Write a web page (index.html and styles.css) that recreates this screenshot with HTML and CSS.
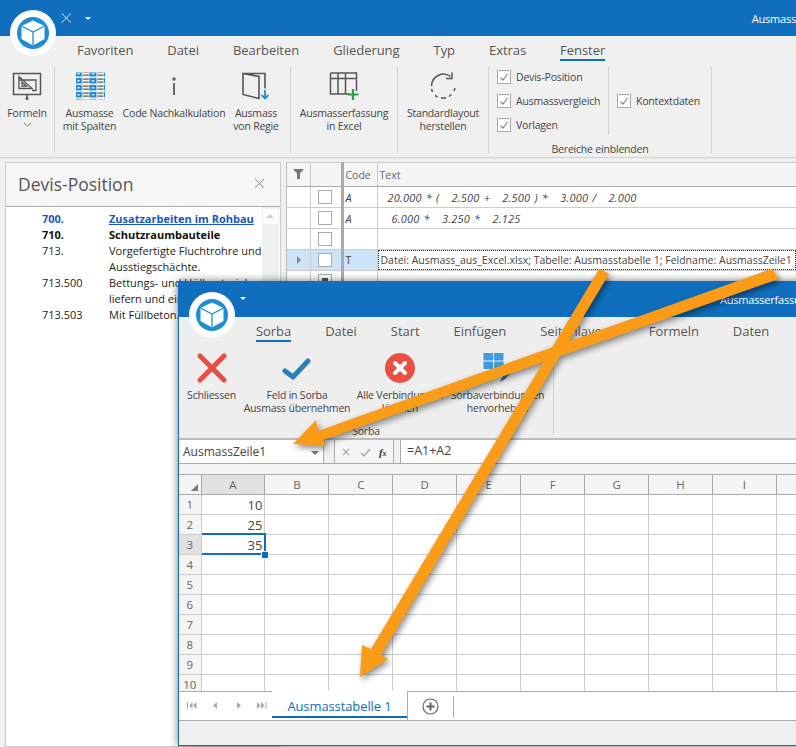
FILE: index.html
```html
<!DOCTYPE html>
<html lang="de">
<head>
    <meta charset="UTF-8">
    <title>Ausmass aus Excel</title>
    <link rel="stylesheet" href="styles.css">
</head>
<body>
    <!-- Sorba main window -->
    <div class="app">
        <div class="titlebar">
            <svg class="title-close" width="14" height="14" viewBox="0 0 14 14"><path d="M1 1l12 12M13 1L1 13" stroke="#fff" stroke-width="1.100" fill="none"/></svg>
            <span class="caret"></span>
            <span class="title-text">Ausmass</span>
        </div>
        <div class="tabs">
            <span>Favoriten</span><span>Datei</span><span>Bearbeiten</span><span>Gliederung</span><span>Typ</span><span>Extras</span><span class="tab-active">Fenster</span>
        </div>
        <div class="ribbon">
            <div class="group group-formeln">
                <div class="rb-item">
                    <svg class="rb-icon" width="30" height="30" viewBox="0 0 30 30"><path d="M1.500 2.500h27v21h-27zM15 24v4" stroke="#555" stroke-width="1.500" fill="none"/><circle cx="15" cy="27.500" r="1.500" fill="#555"/><path d="M7 5.500l13 12H7zM10 11v4h4.500zM7 9h17v10.500H20" stroke="#555" stroke-width="1.300" fill="none"/></svg>
                    <span>Formeln</span>
                    <svg class="chev" width="9" height="5" viewBox="0 0 9 5"><path d="M1 1l3.500 3L8 1" stroke="#777" fill="none"/></svg>
                </div>
            </div>
            <div class="group group-ausmass">
                <div class="rb-item w-spalten">
                    <svg class="rb-icon" width="30" height="30" viewBox="0 0 30 30">
                        <defs><pattern id="spalten" width="14.500" height="7" patternUnits="userSpaceOnUse"><rect width="7" height="5.500" fill="#1f8dd6"/><rect x="2.500" y="2" width="2" height="1.500" fill="#fff"/><rect x="8" y="0.500" width="6" height="1.300" fill="#666"/><rect x="8" y="3.500" width="6" height="1.300" fill="#666"/></pattern></defs>
                        <rect x="1" y="1.500" width="29" height="27" fill="url(#spalten)"/>
                    </svg>
                    <span>Ausmasse<br>mit Spalten</span>
                </div>
                <div class="rb-item w-code">
                    <svg class="rb-icon" width="30" height="30" viewBox="0 0 30 30"><circle cx="15" cy="8" r="1.800" fill="#666"/><rect x="14" y="12" width="2" height="12" fill="#666"/></svg>
                    <span>Code Nachkalkulation</span>
                </div>
                <div class="rb-item w-regie">
                    <svg class="rb-icon" width="30" height="30" viewBox="0 0 30 30"><path d="M2 2.500h22v15M2 2.500l16 3v22l-16-4zM18 6" stroke="#555" stroke-width="1.600" fill="none"/><path d="M24 19v8M20.500 24l3.500 3.500 3.500-3.500" stroke="#1f8dd6" stroke-width="1.800" fill="none"/></svg>
                    <span>Ausmass<br>von Regie</span>
                </div>
            </div>
            <div class="group group-excel">
                <div class="rb-item w-excel">
                    <svg class="rb-icon" width="30" height="30" viewBox="0 0 30 30"><path d="M1.500 2h26v18M1.500 2v21h19M1.500 7.500h26M9 2v21M16.500 2v21" stroke="#555" stroke-width="1.500" fill="none"/><path d="M24 18v11M18.500 23.500h11" stroke="#2a9d4a" stroke-width="2.200" fill="none"/></svg>
                    <span>Ausmasserfassung<br>in Excel</span>
                </div>
            </div>
            <div class="group group-layout">
                <div class="rb-item w-layout">
                    <svg class="rb-icon" width="30" height="30" viewBox="0 0 30 30"><path d="M22.500 5.500A12 12 0 0 0 3.500 15" stroke="#555" stroke-width="1.500" fill="none"/><path d="M3.500 18l1 3M7 24.500l2.500 1.500M13 27h5M21 25.500l2.500-2M26 20l1-3" stroke="#555" stroke-width="1.500" fill="none"/><path d="M24 1.500v6h-6" stroke="#555" stroke-width="1.500" fill="none"/></svg>
                    <span>Standardlayout<br>herstellen</span>
                </div>
            </div>
            <div class="group group-checks">
                <div class="checks-row">
                    <div class="check-col">
                        <label class="check"><i class="box"><svg width="12" height="12" viewBox="0 0 12 12"><path d="M2.500 6.500l2.500 2.500 4.500-6" stroke="#888" stroke-width="1.200" fill="none"/></svg></i>Devis-Position</label>
                        <label class="check"><i class="box"><svg width="12" height="12" viewBox="0 0 12 12"><path d="M2.500 6.500l2.500 2.500 4.500-6" stroke="#888" stroke-width="1.200" fill="none"/></svg></i>Ausmassvergleich</label>
                        <label class="check"><i class="box"><svg width="12" height="12" viewBox="0 0 12 12"><path d="M2.500 6.500l2.500 2.500 4.500-6" stroke="#888" stroke-width="1.200" fill="none"/></svg></i>Vorlagen</label>
                    </div>
                    <div class="check-col check-col-2">
                        <label class="check"><i class="box"><svg width="12" height="12" viewBox="0 0 12 12"><path d="M2.500 6.500l2.500 2.500 4.500-6" stroke="#888" stroke-width="1.200" fill="none"/></svg></i>Kontextdaten</label>
                    </div>
                </div>
                <div class="group-label">Bereiche einblenden</div>
            </div>
        </div>

        <div class="workspace">
            <div class="pane">
                <div class="pane-head">
                    <h2>Devis-Position</h2>
                    <svg width="11" height="11" viewBox="0 0 11 11"><path d="M1 1l9 9M10 1l-9 9" stroke="#888" fill="none"/></svg>
                </div>
                <div class="pane-body">
                    <div class="devis">
                        <span class="pos pos-link">700.</span><span class="pos-link pos-title">Zusatzarbeiten im Rohbau</span>
                        <b class="pos">710.</b><b>Schutzraumbauteile</b>
                        <span class="pos">713.</span><span>Vorgefertigte Fluchtrohre und Ausstiegschächte.</span>
                        <span class="pos">713.500</span><span>Bettungs- und Hüllmaterial liefern und einbauen.</span>
                        <span class="pos">713.503</span><span>Mit Füllbeton.</span>
                    </div>
                    <div class="scroll"><div class="scroll-btn"></div></div>
                </div>
            </div>

            <div class="grid-wrap">
                <table class="mgrid">
                    <thead>
                        <tr>
                            <th class="c-ind"><svg width="11" height="10" viewBox="0 0 11 10"><path d="M0 0h11L7 4.500V10H4V4.500z" fill="#777"/></svg></th>
                            <th class="c-chk"></th>
                            <th class="c-code">Code</th>
                            <th class="c-text">Text</th>
                        </tr>
                    </thead>
                    <tbody>
                        <tr class="formula">
                            <td class="c-ind"></td><td class="c-chk"><i class="box"></i></td><td class="c-code">A</td><td class="c-text">20.000 * (&nbsp;&nbsp;&nbsp;2.500 +&nbsp;&nbsp;&nbsp;2.500 ) *&nbsp;&nbsp;&nbsp;3.000 /&nbsp;&nbsp;&nbsp;2.000</td>
                        </tr>
                        <tr class="formula">
                            <td class="c-ind"></td><td class="c-chk"><i class="box"></i></td><td class="c-code">A</td><td class="c-text">&nbsp;6.000 *&nbsp;&nbsp;&nbsp;3.250 *&nbsp;&nbsp;&nbsp;2.125</td>
                        </tr>
                        <tr>
                            <td class="c-ind"></td><td class="c-chk"><i class="box"></i></td><td class="c-code"></td><td class="c-text"></td>
                        </tr>
                        <tr class="row-current">
                            <td class="c-ind"><span class="row-arrow"></span></td><td class="c-chk"><i class="box"></i></td><td class="c-code">T</td><td class="c-text"><div class="focus-cell">Datei: Ausmass_aus_Excel.xlsx; Tabelle: Ausmasstabelle 1; Feldname: AusmassZeile1</div></td>
                        </tr>
                        <tr>
                            <td class="c-ind"></td><td class="c-chk"><i class="box box-mixed"></i></td><td class="c-code"></td><td class="c-text"></td>
                        </tr>
                    </tbody>
                </table>
            </div>
        </div>
    </div>

    <!-- Excel window on top -->
    <div class="xl">
        <div class="titlebar xl-title">
            <span class="caret"></span>
            <span class="title-text">Ausmasserfassung in Excel</span>
        </div>
        <div class="tabs xl-tabs">
            <span class="tab-active">Sorba</span><span>Datei</span><span>Start</span><span>Einfügen</span><span>Seitenlayout</span><span>Formeln</span><span>Daten</span>
        </div>
        <div class="xl-ribbon">
            <div class="xl-group">
                <div class="xl-items">
                    <div class="rb-item w-schliessen">
                        <svg class="xl-icon" width="30" height="30" viewBox="0 0 30 30"><path d="M3 3l24 24M27 3L3 27" stroke="#e94f44" stroke-width="5" stroke-linecap="round" fill="none"/></svg>
                        <span>Schliessen</span>
                    </div>
                    <div class="rb-item w-feld">
                        <svg class="xl-icon" width="30" height="30" viewBox="0 0 30 30"><path d="M3 18l8 6L26 8" stroke="#2d7fb8" stroke-width="5" stroke-linecap="round" stroke-linejoin="round" fill="none"/></svg>
                        <span>Feld in Sorba<br>Ausmass übernehmen</span>
                    </div>
                    <div class="rb-item w-alle">
                        <svg class="xl-icon" width="30" height="30" viewBox="0 0 30 30"><circle cx="15" cy="15" r="15" fill="#e94f44"/><path d="M10 10l10 10M20 10L10 20" stroke="#fff" stroke-width="4" stroke-linecap="round" fill="none"/></svg>
                        <span>Alle Verbindungen<br>löschen</span>
                    </div>
                    <div class="rb-item w-hervor">
                        <svg class="xl-icon" width="30" height="30" viewBox="0 0 30 30"><path d="M0.500 0h9.500v7.500H0.500zM11 0h9.500v7.500H11zM0.500 8.500h9.500v7.500H0.500zM11 8.500h9.500v7.500H11z" fill="#3d9ce0"/><path d="M17 29l2-5 7-7 2.500 2.500-7 7z" fill="#2d7fb8"/></svg>
                        <span>Sorbaverbindungen<br>hervorheben</span>
                    </div>
                </div>
                <div class="group-label">Sorba</div>
            </div>
        </div>
        <div class="formula-bar">
            <div class="namebox">AusmassZeile1<span class="name-caret"></span></div>
            <div class="fxbox">
                <svg width="40" height="12" viewBox="0 0 40 12"><path d="M4 3l6 6M10 3L4 9" stroke="#aaa" stroke-width="1.300" fill="none"/><path d="M22 7l3 3 6-7" stroke="#aaa" stroke-width="1.500" fill="none"/></svg>
                <em>f<small>x</small></em>
            </div>
            <div class="fxinput">=A1+A2</div>
        </div>
        <div class="sheet-gap"></div>
        <table class="sheet">
            <thead>
                <tr><th class="corner"></th><th class="col-on">A</th><th>B</th><th>C</th><th>D</th><th>E</th><th>F</th><th>G</th><th>H</th><th>I</th><th>J</th></tr>
            </thead>
            <tbody>
                <tr><th>1</th><td>10</td><td></td><td></td><td></td><td></td><td></td><td></td><td></td><td></td><td></td></tr>
                <tr><th>2</th><td>25</td><td></td><td></td><td></td><td></td><td></td><td></td><td></td><td></td><td></td></tr>
                <tr><th class="col-on">3</th><td class="cell-on">35</td><td></td><td></td><td></td><td></td><td></td><td></td><td></td><td></td><td></td></tr>
                <tr><th>4</th><td></td><td></td><td></td><td></td><td></td><td></td><td></td><td></td><td></td><td></td></tr>
                <tr><th>5</th><td></td><td></td><td></td><td></td><td></td><td></td><td></td><td></td><td></td><td></td></tr>
                <tr><th>6</th><td></td><td></td><td></td><td></td><td></td><td></td><td></td><td></td><td></td><td></td></tr>
                <tr><th>7</th><td></td><td></td><td></td><td></td><td></td><td></td><td></td><td></td><td></td><td></td></tr>
                <tr><th>8</th><td></td><td></td><td></td><td></td><td></td><td></td><td></td><td></td><td></td><td></td></tr>
                <tr><th>9</th><td></td><td></td><td></td><td></td><td></td><td></td><td></td><td></td><td></td><td></td></tr>
                <tr><th>10</th><td></td><td></td><td></td><td></td><td></td><td></td><td></td><td></td><td></td><td></td></tr>
            </tbody>
        </table>
        <div class="sheet-tabs">
            <div class="sheet-nav">
                <svg width="80" height="10" viewBox="0 0 80 10"><g fill="#aaa"><path d="M0 1h1v7H0zM5.500 1v7L2 4.500zM9.500 1v7L6 4.500z"/><path d="M30 1v7l-4-3.500z"/><path d="M50 1v7l4-3.500z"/><path d="M70 1v7l3.500-3.500zM74 1v7l3.500-3.500zM78.500 1h1v7h-1z"/></g></svg>
            </div>
            <div class="sheet-tab">Ausmasstabelle 1</div>
            <div class="sheet-add">
                <svg width="17" height="17" viewBox="0 0 17 17"><circle cx="8.500" cy="8.500" r="7.500" stroke="#666" stroke-width="1.200" fill="none"/><path d="M8.500 4.500v8M4.500 8.500h8" stroke="#666" stroke-width="2" fill="none"/></svg>
                <span class="add-sep"></span>
            </div>
        </div>
        <div class="statusbar"></div>
    </div>

    <!-- Logos, drawn over both ribbons -->
    <svg class="logo logo-back" width="46" height="46" viewBox="0 0 46 46"><use href="#cube"/></svg>
    <svg class="logo logo-front" width="46" height="46" viewBox="0 0 46 46">
        <g id="cube">
            <circle cx="23" cy="23" r="23" fill="#fff"/>
            <circle cx="23" cy="23" r="16" fill="#1f8dd6"/>
            <path d="M23 10.500l11.500 5.500v13L23 35.500 11.500 29V16z" fill="#fff"/>
            <path d="M11.500 16L23 22l11.500-6M23 22v13.500" stroke="#1f8dd6" stroke-width="1.300" fill="none"/>
        </g>
    </svg>

    <!-- Callout arrows -->
    <svg class="arrows" width="796" height="747" viewBox="0 0 796 747">
        <path d="M772.500 268.500L778.500 279 323 440 326 446 293 444 316 420 318 431z" fill="#fa9c17"/>
        <path d="M599.500 268.500L609 274 381 655 388 659 360 677 362 645 371 649z" fill="#fa9c17"/>
    </svg>
</body>
</html>
```

FILE: styles.css
```css
* {
    box-sizing: border-box;
}

html, body {
    margin: 0;
    height: 747px;
    overflow: hidden;
    background: #fff;
}

body {
    position: relative;
    font-family: "Open Sans", "Noto Sans", sans-serif;
    font-size: 10.5px;
    letter-spacing: -0.2px;
    color: #444;
}

.titlebar {
    display: flex;
    align-items: center;
    height: 36px;
    background: #106ebe;
    color: #fff;
    white-space: nowrap;
    overflow: hidden;
}

.title-close {
    margin-left: 61px;
}

.caret {
    width: 0;
    height: 0;
    margin-left: 13px;
    border: 3.5px solid transparent;
    border-top: 3.5px solid #fff;
    border-bottom: 0;
}

.title-text {
    margin-left: 661px;
    font-size: 11px;
}

.tabs {
    display: flex;
    gap: 34px;
    height: 30px;
    padding: 4px 0 0 77px;
    background: #f0f0f0;
    font-size: 13px;
    letter-spacing: -0.05px;
    color: #555;
}

.tabs span {
    height: 21px;
    line-height: 20px;
}

.tab-active {
    border-bottom: 2px solid #106ebe;
}

.ribbon {
    display: flex;
    height: 92px;
    padding-bottom: 4px;
    background: #f0f0f0;
    border-bottom: 1px solid #d0d0d0;
}

.group {
    display: flex;
    border-right: 1px solid #d4d4d4;
}

.group-formeln { width: 55px; }
.group-ausmass { width: 236px; }
.group-excel { width: 107px; }
.group-layout { width: 91px; }
.group-checks { width: 223px; flex-direction: column; }

.rb-item {
    display: flex;
    flex-direction: column;
    align-items: center;
    flex: none;
    text-align: center;
    line-height: 13px;
    white-space: nowrap;
}

.rb-icon {
    margin: 5px 0 6px;
}

.chev {
    margin-top: 2px;
}

.group-formeln .rb-item { width: 54px; }
.w-spalten { width: 69px; margin-left: 0; }
.w-code { width: 100px; }
.w-regie { width: 64px; }
.w-excel { width: 106px; }
.w-layout { width: 90px; }

.checks-row {
    display: flex;
    flex: none;
    height: 69px;
    padding-top: 1px;
}

.check-col {
    display: flex;
    flex-direction: column;
    justify-content: center;
    gap: 10px;
    width: 120px;
    padding-left: 8px;
    border-right: 1px solid #d4d4d4;
}

.check-col-2 {
    flex: 1;
    border-right: 0;
}

.check {
    display: flex;
    align-items: center;
    gap: 5px;
    height: 14px;
    white-space: nowrap;
}

.box {
    display: flex;
    align-items: center;
    justify-content: center;
    flex: none;
    width: 14px;
    height: 14px;
    background: #fff;
    border: 1px solid #aaa;
}

.group-label {
    flex: none;
    margin-top: 7px;
    text-align: center;
    line-height: 14px;
}

.workspace {
    display: flex;
    height: 589px;
    padding: 4px 0 0 5px;
    background: #f0f0f0;
}

.pane {
    display: flex;
    flex-direction: column;
    width: 276px;
    background: #fff;
    border: 1px solid #ccc;
}

.pane-head {
    display: flex;
    align-items: center;
    justify-content: space-between;
    height: 44px;
    padding: 0 15px 2px 12px;
    background: #f6f6f6;
    border-bottom: 1px solid #aaa;
}

.pane-head h2 {
    margin: 0;
    font-size: 17.5px;
    font-weight: 400;
    letter-spacing: 0;
    color: #555;
}

.pane-body {
    display: flex;
    flex: 1;
}

.devis {
    display: grid;
    grid-template-columns: 67px 1fr;
    align-content: start;
    width: 256px;
    padding: 4px 0 0 36px;
    font-size: 11px;
    letter-spacing: 0;
    line-height: 16px;
    color: #222;
}

.devis b {
    color: #111;
}

.pos-link {
    font-weight: 700;
    color: #1a56c4;
}

.pos-title {
    text-decoration: underline;
}

.scroll {
    width: 17px;
    padding: 2px 1px;
    background: #f0f0f0;
}

.scroll-btn {
    position: relative;
    height: 15px;
    background: #fff;
}

.scroll-btn::after {
    content: "";
    position: absolute;
    top: 5px;
    left: 3px;
    border: 4px solid transparent;
    border-top: 0;
    border-bottom: 4px solid #ccc;
}

.grid-wrap {
    flex: 1;
    margin-left: 5px;
    background: #fff;
    border-left: 1px solid #bbb;
    overflow: hidden;
}

.mgrid {
    width: 100%;
    table-layout: fixed;
    border-collapse: collapse;
    font-size: 10.5px;
    letter-spacing: 0;
}

.mgrid th {
    height: 24px;
    padding: 0 0 0 2px;
    background: #f5f5f5;
    border-bottom: 1px solid #aaa;
    border-top: 1px solid #ccc;
    font-weight: 400;
    text-align: left;
    color: #666;
}

.mgrid td {
    height: 21px;
    padding: 0 0 0 2px;
    border-bottom: 1px solid #ccc;
    white-space: nowrap;
    overflow: hidden;
}

.c-ind { width: 23px; border-right: 1px solid #ccc; }
.c-chk { width: 32px; border-right: 3px solid #aaa; }
.c-code { width: 35px; border-right: 1px solid #ccc; }

.mgrid .c-ind {
    padding-left: 6px;
}

.mgrid .c-chk {
    padding-left: 7px;
}

.mgrid .c-text {
    padding-left: 2px;
}

.formula td {
    font-size: 11px;
    font-style: italic;
    letter-spacing: 0.2px;
    word-spacing: 1px;
    color: #444;
}

.mgrid .formula .c-text {
    padding-left: 10px;
}

.row-current .c-ind,
.row-current .c-chk,
.row-current .c-code {
    background: #cce4f7;
}

.mgrid .row-current .c-text {
    padding: 0;
}

.focus-cell {
    height: 20px;
    padding: 0 2px;
    line-height: 18px;
    border: 1px dotted #333;
}

.row-arrow {
    display: block;
    width: 0;
    height: 0;
    margin-left: 4px;
    border: 4px solid transparent;
    border-right: 0;
    border-left: 4px solid #888;
}

.box-mixed::after {
    content: "";
    width: 6px;
    height: 6px;
    background: #555;
}

/* Excel window */
.xl {
    position: absolute;
    left: 178px;
    top: 281px;
    display: flex;
    flex-direction: column;
    width: 640px;
    height: 465px;
    background: #f0f0f0;
    border-left: 1px solid #106ebe;
    border-bottom: 1px solid #106ebe;
    box-shadow: 0 0 8px rgba(0, 0, 0, 0.55);
}

.xl-title .caret {
    margin-left: 61px;
    margin-top: -2px;
}

.xl-title .title-text {
    margin-left: 474px;
}

.xl-tabs {
    padding-left: 77px;
    background: #eee;
}

.xl-ribbon {
    height: 93px;
    background: #eee;
    border-bottom: 2px solid #bbb;
}

.xl-group {
    width: 375px;
    height: 88px;
    border-right: 1px solid #d0d0d0;
}

.xl-items {
    display: flex;
}

.xl-icon {
    margin: 6px 0 6px;
}

.w-schliessen { width: 65px; }
.w-feld { width: 106px; }
.w-alle { width: 100px; }
.w-hervor { width: 95px; }

.xl-group .group-label {
    margin-top: 9px;
}

.formula-bar {
    display: flex;
    flex: none;
    height: 24px;
    background: #f0f0f0;
    border-bottom: 1px solid #aaa;
}

.namebox {
    position: relative;
    width: 145px;
    padding-left: 4px;
    background: #fff;
    border-right: 1px solid #aaa;
    font-size: 12px;
    letter-spacing: 0;
    line-height: 24px;
}

.name-caret {
    position: absolute;
    top: 11px;
    right: 4px;
    border: 4px solid transparent;
    border-top: 4px solid #777;
    border-bottom: 0;
}

.fxbox {
    display: flex;
    align-items: center;
    width: 60px;
    margin-left: 10px;
    padding-left: 4px;
    background: #f5f5f5;
    border: 1px solid #aaa;
    border-width: 0 1px;
}

.fxbox em {
    font-family: "Liberation Serif", serif;
    font-size: 11px;
    font-weight: 700;
    color: #333;
}

.fxbox small {
    font-size: 8px;
}

.fxinput {
    flex: 1;
    margin-left: 6px;
    padding-left: 6px;
    background: #fff;
    border-left: 1px solid #aaa;
    font-size: 12.5px;
    letter-spacing: 0;
    line-height: 22px;
}

.sheet-gap {
    flex: none;
    height: 10px;
    background: #f5f5f5;
}

.sheet {
    width: 662px;
    table-layout: fixed;
    border-collapse: collapse;
    background: #fff;
    flex: none;
}

.sheet th {
    height: 20px;
    padding: 0;
    background: #f5f5f5;
    border: 1px solid #ccc;
    border-left: 0;
    font-size: 11.5px;
    font-weight: 400;
    letter-spacing: 0;
    color: #666;
}

.sheet thead th {
    border-top: 1px solid #aaa;
    border-bottom: 1px solid #aaa;
    border-right: 1px solid #aaa;
}

.sheet .col-on {
    background: #e1e1e1;
}

.sheet .corner {
    position: relative;
    width: 22px;
}

.sheet .corner::after {
    content: "";
    position: absolute;
    right: 3px;
    bottom: 3px;
    border-style: solid;
    border-width: 0 0 7px 7px;
    border-color: transparent transparent #777 transparent;
}

.sheet td {
    width: 64px;
    height: 20px;
    padding: 0 2px 0 0;
    border: 1px solid #ccc;
    border-left: 0;
    font-size: 13px;
    letter-spacing: 0;
    text-align: right;
    color: #444;
}

.sheet .cell-on {
    position: relative;
}

.cell-on::before {
    content: "";
    position: absolute;
    top: -2px;
    left: 0;
    right: -2px;
    bottom: -1px;
    border: 2px solid #106ebe;
    border-left: 0;
}

.cell-on::after {
    content: "";
    position: absolute;
    right: -4px;
    bottom: -4px;
    width: 6px;
    height: 6px;
    background: #106ebe;
    outline: 1px solid #fff;
}

.sheet-tabs {
    position: relative;
    display: flex;
    flex: none;
    height: 30px;
    margin-top: -4px;
    background: #fff;
    border-bottom: 1px solid #aaa;
}

.sheet-nav {
    display: flex;
    align-items: center;
    width: 93px;
    padding-left: 8px;
    border-top: 1px solid #aaa;
}

.sheet-tab {
    width: 135px;
    height: 27px;
    padding-top: 4px;
    border-bottom: 2px solid #106ebe;
    font-size: 13px;
    letter-spacing: -0.1px;
    line-height: 22px;
    text-align: center;
    color: #106ebe;
}

.sheet-add {
    display: flex;
    align-items: center;
    flex: 1;
    padding-left: 14px;
    border-top: 1px solid #aaa;
    border-left: 1px solid #aaa;
}

.add-sep {
    width: 1px;
    height: 21px;
    margin-left: 14px;
    background: #aaa;
}

.statusbar {
    flex: 1;
    background: #f0f0f0;
}

.logo {
    position: absolute;
}

.logo-back {
    left: 10px;
    top: 10px;
}

.logo-front {
    left: 189px;
    top: 292px;
}

.arrows {
    position: absolute;
    left: 0;
    top: 0;
    filter: drop-shadow(2px 3px 3px rgba(0, 0, 0, 0.45));
}
```
